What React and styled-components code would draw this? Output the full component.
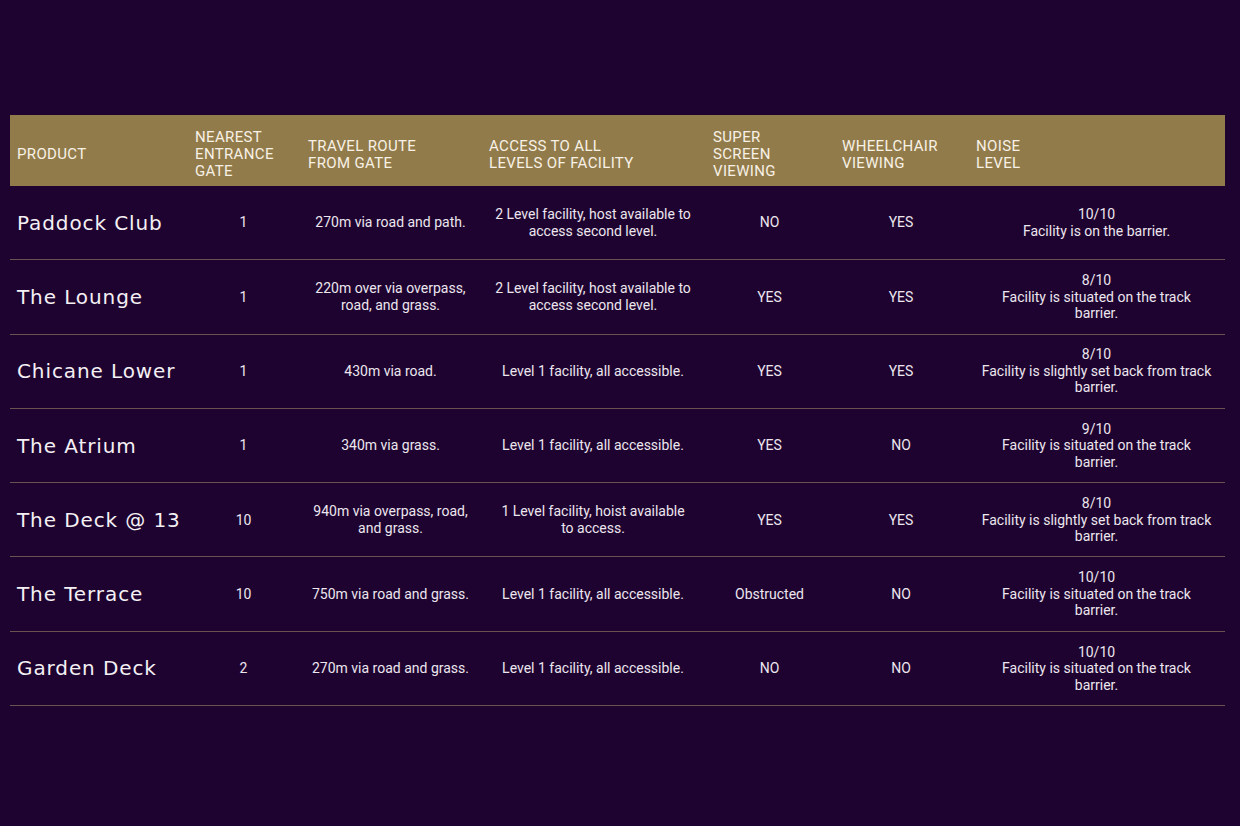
import React from 'react';
import styled, { createGlobalStyle } from 'styled-components';

const GlobalStyle = createGlobalStyle`
    html, body {
        margin: 0;
        padding: 0;
        background: #1e0330;
    }
`;

const COLUMNS = '177px 113px 181px 224px 129px 134px 257px';

const Page = styled.div`
    width: 1240px;
    height: 826px;
    background: #1e0330;
    padding: 115px 15px 0 10px;
    box-sizing: border-box;
    font-family: Roboto, 'Liberation Sans', sans-serif;
`;

const HeaderRow = styled.div`
    display: grid;
    grid-template-columns: ${COLUMNS};
    height: 71px;
    background: #927b4a;
    align-items: center;
`;

const HeadCell = styled.div`
    padding: 8px 0 0 ${props => props.first ? 7 : 8}px;
    color: #f7f1e6;
    font-size: 15px;
    line-height: 17px;
    text-transform: uppercase;
    letter-spacing: 0.35px;
`;

const Row = styled.div`
    display: grid;
    grid-template-columns: ${COLUMNS};
    height: 74.3px;
    align-items: center;
    border-bottom: 1px solid #6a5250;
    box-sizing: border-box;
`;

const Name = styled.div`
    padding-left: 7px;
    color: #f4f0f4;
    font-family: 'DejaVu Sans', Roboto, sans-serif;
    font-size: 20px;
    letter-spacing: 0.9px;
`;

const Cell = styled.div`
    text-align: center;
    color: #ece6ee;
    font-size: 14px;
    line-height: 16.5px;
`;

const headers = [
    ['Product'],
    ['Nearest', 'entrance', 'gate'],
    ['Travel route', 'from gate'],
    ['Access to all', 'levels of facility'],
    ['Super', 'screen', 'viewing'],
    ['Wheelchair', 'viewing'],
    ['Noise', 'level'],
];

const rows = [
    {
        name: 'Paddock Club', gate: '1',
        route: ['270m via road and path.'],
        access: ['2 Level facility, host available to', 'access second level.'],
        screen: 'NO', wheelchair: 'YES',
        noise: ['10/10', 'Facility is on the barrier.'],
    },
    {
        name: 'The Lounge', gate: '1',
        route: ['220m over via overpass,', 'road, and grass.'],
        access: ['2 Level facility, host available to', 'access second level.'],
        screen: 'YES', wheelchair: 'YES',
        noise: ['8/10', 'Facility is situated on the track', 'barrier.'],
    },
    {
        name: 'Chicane Lower', gate: '1',
        route: ['430m via road.'],
        access: ['Level 1 facility, all accessible.'],
        screen: 'YES', wheelchair: 'YES',
        noise: ['8/10', 'Facility is slightly set back from track', 'barrier.'],
    },
    {
        name: 'The Atrium', gate: '1',
        route: ['340m via grass.'],
        access: ['Level 1 facility, all accessible.'],
        screen: 'YES', wheelchair: 'NO',
        noise: ['9/10', 'Facility is situated on the track', 'barrier.'],
    },
    {
        name: 'The Deck @ 13', gate: '10',
        route: ['940m via overpass, road,', 'and grass.'],
        access: ['1 Level facility, hoist available', 'to access.'],
        screen: 'YES', wheelchair: 'YES',
        noise: ['8/10', 'Facility is slightly set back from track', 'barrier.'],
    },
    {
        name: 'The Terrace', gate: '10',
        route: ['750m via road and grass.'],
        access: ['Level 1 facility, all accessible.'],
        screen: 'Obstructed', wheelchair: 'NO',
        noise: ['10/10', 'Facility is situated on the track', 'barrier.'],
    },
    {
        name: 'Garden Deck', gate: '2',
        route: ['270m via road and grass.'],
        access: ['Level 1 facility, all accessible.'],
        screen: 'NO', wheelchair: 'NO',
        noise: ['10/10', 'Facility is situated on the track', 'barrier.'],
    },
];

const Lines = ({ lines }) => lines.map((line, i) =>
    <React.Fragment key={i}>
        {i > 0 && <br />}
        {line}
    </React.Fragment>
);

const App = () => {

    const displayHeaders = () => headers.map((lines, i) =>
        <HeadCell key={i} first={i === 0}>
            <Lines lines={lines} />
        </HeadCell>
    );

    const displayRows = () => rows.map(row =>
        <Row key={row.name}>
            <Name>{row.name}</Name>
            <Cell>{row.gate}</Cell>
            <Cell><Lines lines={row.route} /></Cell>
            <Cell><Lines lines={row.access} /></Cell>
            <Cell>{row.screen}</Cell>
            <Cell>{row.wheelchair}</Cell>
            <Cell><Lines lines={row.noise} /></Cell>
        </Row>
    );

    return (
        <>
            <GlobalStyle />
            <Page>
                <HeaderRow>{displayHeaders()}</HeaderRow>
                {displayRows()}
            </Page>
        </>
    );
};

export default App;
